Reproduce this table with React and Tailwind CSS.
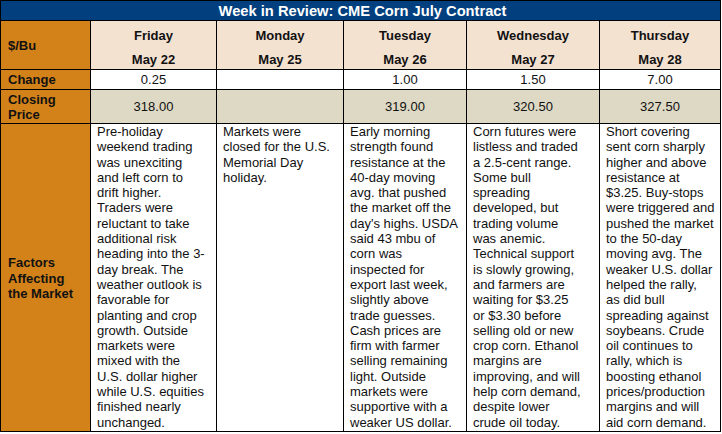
import React from "react";

const days = [
  { d: "Friday", m: "May 22", c: "0.25", p: "318.00", t: ["Pre-holiday", "weekend trading", "was unexciting", "and left corn to", "drift higher.", "Traders were", "reluctant to take", "additional risk", "heading into the 3-", "day break. The", "weather outlook is", "favorable for", "planting and crop", "growth. Outside", "markets were", "mixed with the", "U.S. dollar higher", "while U.S. equities", "finished nearly", "unchanged."] },
  { d: "Monday", m: "May 25", c: "", p: "", t: ["Markets were", "closed for the U.S.", "Memorial Day", "holiday."] },
  { d: "Tuesday", m: "May 26", c: "1.00", p: "319.00", t: ["Early morning", "strength found", "resistance at the", "40-day moving", "avg. that pushed", "the market off the", "day's highs. USDA", "said 43 mbu of", "corn was", "inspected for", "export last week,", "slightly above", "trade guesses.", "Cash prices are", "firm with farmer", "selling remaining", "light. Outside", "markets were", "supportive with a", "weaker US dollar."] },
  { d: "Wednesday", m: "May 27", c: "1.50", p: "320.50", t: ["Corn futures were", "listless and traded", "a 2.5-cent range.", "Some bull", "spreading", "developed, but", "trading volume", "was anemic.", "Technical support", "is slowly growing,", "and farmers are", "waiting for $3.25", "or $3.30 before", "selling old or new", "crop corn. Ethanol", "margins are", "improving, and will", "help corn demand,", "despite lower", "crude oil today."] },
  { d: "Thursday", m: "May 28", c: "7.00", p: "327.50", t: ["Short covering", "sent corn sharply", "higher and above", "resistance at", "$3.25. Buy-stops", "were triggered and", "pushed the market", "to the 50-day", "moving avg. The", "weaker U.S. dollar", "helped the rally,", "as did bull", "spreading against", "soybeans. Crude", "oil continues to", "rally, which is", "boosting ethanol", "prices/production", "margins and will", "aid corn demand."] },
];

export default function App() {
  return (
    <div className="w-[721px] border border-black bg-black font-['Liberation_Sans',Arial,sans-serif] text-[13px] text-[#111]">
      <div className="h-[19px] bg-[#013f7e] text-white font-bold text-[14.7px] leading-[21px] text-center pl-[4px]">
        Week in Review: CME Corn July Contract
      </div>
      <div className="mt-px grid grid-cols-[89px_125px_126px_122px_132px_120px] grid-rows-[48px_19px_33px_307px] gap-px">
        <div className="bg-[#d3821a] font-bold flex items-center pl-[7px] pt-[1px]">$/Bu</div>
        {days.map((x) => (
          <div key={x.d} className="bg-[#f4e2d1] font-bold flex flex-col items-center pt-[3px]">
            <div className="leading-[24px]">{x.d}</div>
            <div className="leading-[24px]">{x.m}</div>
          </div>
        ))}
        <div className="bg-[#d3821a] font-bold flex items-center pl-[7px] leading-[15px]">Change</div>
        {days.map((x) => (
          <div key={x.d} className="bg-white flex items-center justify-center leading-[15px]">{x.c}</div>
        ))}
        <div className="bg-[#d3821a] font-bold flex flex-col justify-center pl-[7px] leading-[15px]">
          <div>Closing</div>
          <div>Price</div>
        </div>
        {days.map((x) => (
          <div key={x.d} className="bg-[#ddd9c4] flex items-center justify-center">{x.p}</div>
        ))}
        <div className="bg-[#d3821a] font-bold flex flex-col justify-center pl-[7px] leading-[15.5px] pt-[2px]">
          <div>Factors</div>
          <div>Affecting</div>
          <div>the Market</div>
        </div>
        {days.map((x) => (
          <div key={x.d} className="bg-white pl-[6px] leading-[15.3px] whitespace-nowrap">
            {x.t.map((l, i) => (
              <div key={i}>{l}</div>
            ))}
          </div>
        ))}
      </div>
    </div>
  );
}
